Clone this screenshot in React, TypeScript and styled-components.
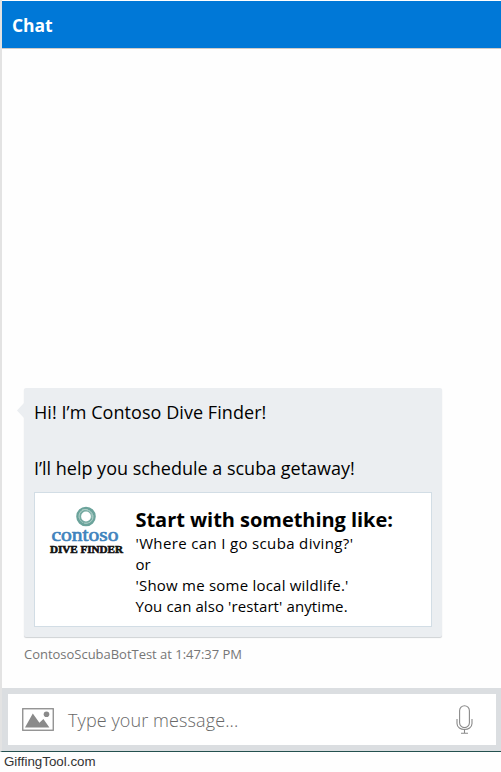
import React from "react";
import styled, { createGlobalStyle } from "styled-components";

const GlobalStyle = createGlobalStyle`
  * { box-sizing: border-box; }
  body { margin: 0; background: #fefefe; overflow: hidden; }
  p, h1, h2 { margin: 0; }
`;

const Page = styled.div`
  width: 501px;
  height: 772px;
  display: flex;
  flex-direction: column;
  font-family: "Open Sans", "Noto Sans", sans-serif;
  color: #000;
  white-space: nowrap;
`;

const Widget = styled.main`
  height: 752px;
  padding-top: 1px;
  border-left: 2px solid #e3e3e3;
  border-bottom: 1px solid #24504f;
  display: flex;
  flex-direction: column;
`;

const Header = styled.header`
  height: 48px;
  flex: none;
  padding-left: 10px;
  background: #0078d7;
  border-bottom: 1px solid #cfcbc8;
  color: #fff;
`;

const HeaderTitle = styled.h1`
  font-size: 17.5px;
  font-weight: 700;
  line-height: 49px;
  letter-spacing: -0.1px;
`;

const Conversation = styled.section`
  flex: 1;
  display: flex;
  flex-direction: column;
  justify-content: flex-end;
  align-items: flex-start;
  padding: 0 0 25px 22px;
`;

const Bubble = styled.article`
  position: relative;
  width: 418px;
  height: 249px;
  padding: 10px;
  border-radius: 2px;
  background: #ebeef1;
  box-shadow: 0 1px 1px #cfd2d4;
`;

const Tail = styled.svg`
  position: absolute;
  left: -7px;
  top: 15px;
  width: 7px;
  height: 15px;
`;

const Line = styled.p<{ $spacing: number }>`
  height: 28px;
  font-size: 18px;
  line-height: 28px;
  letter-spacing: ${(p) => p.$spacing}px;
`;

const Card = styled.div`
  width: 398px;
  height: 135px;
  margin-top: 10px;
  padding: 12px 0 0 14px;
  display: flex;
  border: 1px solid #d2dde5;
  background: #fff;
`;

const Logo = styled.svg`
  width: 78px;
  height: 50px;
  flex: none;
`;

const CardBody = styled.div`
  margin-left: 8.5px;
`;

const CardTitle = styled.h2`
  font-size: 20px;
  font-weight: 700;
  line-height: 29px;
  height: 28px;
  letter-spacing: -0.04px;
`;

const CardText = styled.p<{ $spacing: number }>`
  font-size: 15px;
  line-height: 21px;
  letter-spacing: ${(p) => p.$spacing}px;
`;

const Meta = styled.p`
  margin-top: 8px;
  font-size: 13px;
  line-height: 18px;
  letter-spacing: -0.02px;
  color: #767676;
`;

const Composer = styled.footer`
  height: 63px;
  flex: none;
  padding: 6px 5px 6px 6px;
  background: #dbdee1;
`;

const Field = styled.div`
  height: 51px;
  display: flex;
  align-items: center;
  padding: 0 23px 0 14px;
  background: #fff;
`;

const Placeholder = styled.span`
  flex: 1;
  margin-left: 14px;
  font-size: 18px;
  font-weight: 300;
  letter-spacing: 0.1px;
  color: #686868;
`;

const Credit = styled.div`
  padding-left: 4px;
  font: 13.33px/20px "Liberation Sans", Arial, sans-serif;
  color: #333;
`;

const DiveLogo = () => (
  <Logo viewBox="0 0 78 50">
    <g fill="none" stroke="#5f9c93">
      <circle cx="37" cy="11.5" r="8.4" strokeWidth="2.8" stroke="#6ba39b" />
      <circle cx="37" cy="11.5" r="5.9" strokeWidth="2" stroke="#76aaa2" />
      <path d="M30 13c-1-6 4-10 9-8M44 10c1 6-4 9-9 8M33 5c6-2 11 3 10 8" strokeWidth=".7" stroke="#b5d2cc" />
    </g>
    <text x="2.5" y="35.5" textLength="67" lengthAdjust="spacingAndGlyphs" fontFamily="Liberation Serif, serif" fontSize="19.5" fontWeight="400" fill="#3f83bd" stroke="#3f83bd" strokeWidth=".7">contoso</text>
    <text x="1" y="47.5" textLength="73" lengthAdjust="spacingAndGlyphs" fontFamily="Liberation Serif, serif" fontSize="11" fontWeight="700" fill="#111" stroke="#111" strokeWidth=".6">DIVE FINDER</text>
  </Logo>
);

const PictureIcon = () => (
  <svg width="32" height="23" viewBox="0 0 32 23">
    <rect x=".75" y=".75" width="30.5" height="21.5" fill="none" stroke="#8a8a8a" strokeWidth="1.3" />
    <path d="M3 19.5 10.8 5.5l6.6 9.2 4-3.6 6 8.4z" fill="#8a8a8a" />
    <circle cx="24.5" cy="6.3" r="2.8" fill="#8a8a8a" />
  </svg>
);

const MicIcon = () => (
  <svg width="17" height="29" viewBox="0 0 17 29" fill="none" stroke="#8a8a8a" strokeWidth="1.1">
    <rect x="3.6" y=".8" width="9.8" height="21.8" rx="4.9" />
    <path d="M1 14v4.5c0 8 15 8 15 0V14M8.5 24.5v3.7M5 28.2h7" />
  </svg>
);

export default function App() {
  return (
    <Page>
      <GlobalStyle />
      <Widget>
        <Header>
          <HeaderTitle>Chat</HeaderTitle>
        </Header>
        <Conversation>
          <Bubble>
            <Tail viewBox="0 0 7 15">
              <path d="M7 0v15L0 7.5z" fill="#ebeef1" />
            </Tail>
            <Line $spacing={0.06}>Hi! I’m Contoso Dive Finder!</Line>
            <Line $spacing={0} />
            <Line $spacing={-0.01}>I’ll help you schedule a scuba getaway!</Line>
            <Card>
              <DiveLogo />
              <CardBody>
                <CardTitle>Start with something like:</CardTitle>
                <CardText $spacing={0.35}>'Where can I go scuba diving?'</CardText>
                <CardText $spacing={0}>or</CardText>
                <CardText $spacing={0.22}>'Show me some local wildlife.'</CardText>
                <CardText $spacing={0.1}>You can also 'restart' anytime.</CardText>
              </CardBody>
            </Card>
          </Bubble>
          <Meta>ContosoScubaBotTest at 1:47:37 PM</Meta>
        </Conversation>
        <Composer>
          <Field>
            <PictureIcon />
            <Placeholder>Type your message...</Placeholder>
            <MicIcon />
          </Field>
        </Composer>
      </Widget>
      <Credit>GiffingTool.com</Credit>
    </Page>
  );
}
